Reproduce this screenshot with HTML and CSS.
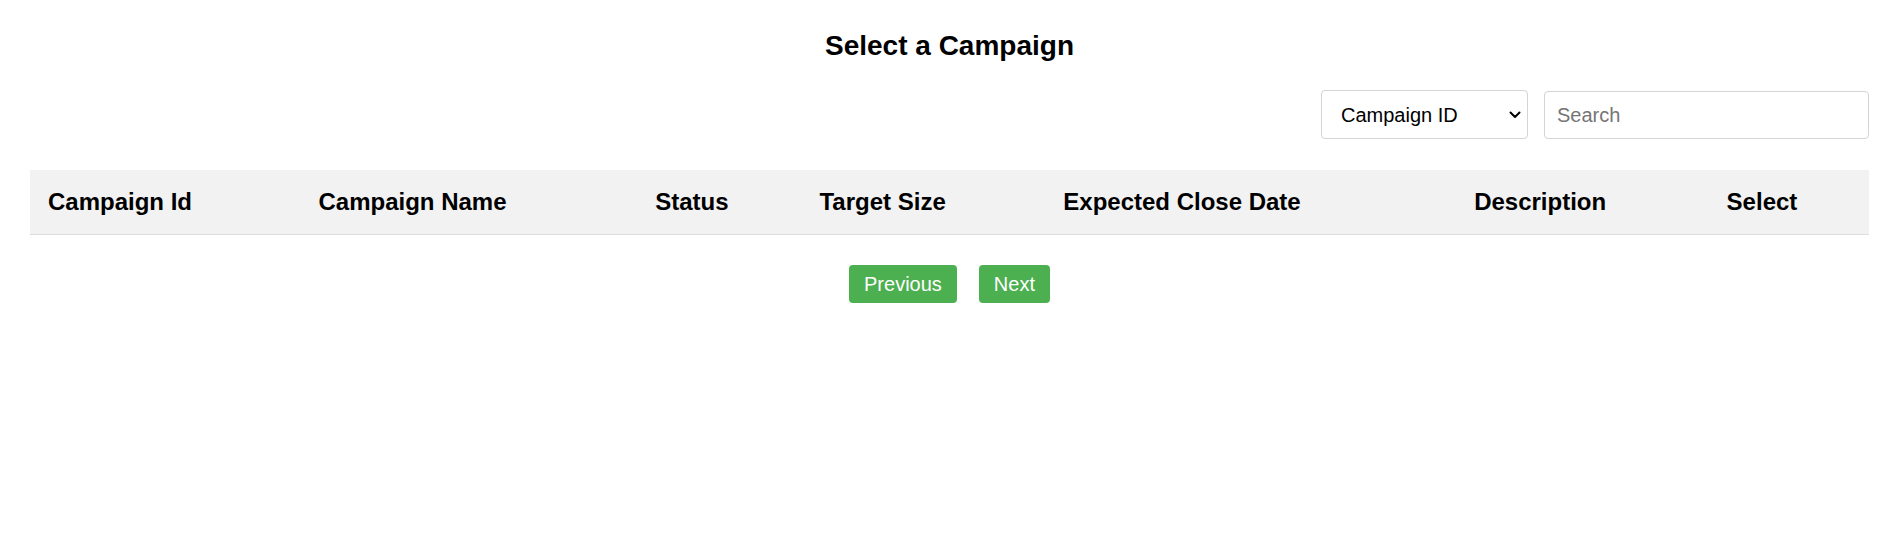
FILE: index.html
```html
<!DOCTYPE html>
<html lang="en">
<head>
<meta charset="utf-8">
<title>Select a Campaign</title>
<link rel="stylesheet" href="styles.css">
</head>
<body>
<div class="page">
  <h2 class="title">Select a Campaign</h2>
  <div class="controls">
    <div class="select-wrap">
      <select class="filter">
        <option>Campaign ID</option>
        <option>Campaign Name</option>
        <option>Status</option>
      </select>
      <svg class="chev" width="12" height="8" viewBox="0 0 12 8" aria-hidden="true"><path d="M1.5 1.5 L6 6 L10.5 1.5" fill="none" stroke="#000" stroke-width="2" stroke-linecap="round" stroke-linejoin="round"/></svg>
    </div>
    <input class="search" type="text" placeholder="Search">
  </div>
  <table class="campaigns">
    <thead>
      <tr>
        <th>Campaign Id</th>
        <th>Campaign Name</th>
        <th>Status</th>
        <th>Target Size</th>
        <th>Expected Close Date</th>
        <th>Description</th>
        <th>Select</th>
      </tr>
    </thead>
    <tbody></tbody>
  </table>
  <div class="pager">
    <button class="btn">Previous</button>
    <button class="btn">Next</button>
  </div>
</div>
</body>
</html>
```
FILE: styles.css
```css
* { box-sizing: border-box; }
html, body { margin: 0; padding: 0; background: #fff; }
body {
  font-family: "Liberation Sans", Arial, sans-serif;
  color: #000;
}
.page {
  padding: 30px 30px;
}
.title {
  margin: 0;
  text-align: center;
  font-size: 28px;
  font-weight: bold;
  line-height: 32px;
}
.controls {
  margin-top: 28px;
  display: flex;
  justify-content: flex-end;
  align-items: flex-end;
  gap: 16px;
}
.select-wrap {
  position: relative;
  width: 207px;
  height: 49px;
}
.filter {
  appearance: none;
  -webkit-appearance: none;
  width: 100%;
  height: 100%;
  margin: 0;
  padding: 0 30px 0 19px;
  font-family: "Liberation Sans", Arial, sans-serif;
  font-size: 20px;
  color: #000;
  background: #fff;
  border: 1px solid #d4d4d4;
  border-radius: 4px;
  outline: none;
}
.chev {
  position: absolute;
  right: 7px;
  top: 21px;
  pointer-events: none;
}
.search {
  width: 325px;
  height: 48px;
  margin: 0;
  padding: 0 12px;
  font-family: "Liberation Sans", Arial, sans-serif;
  font-size: 20px;
  color: #000;
  background: #fff;
  border: 1px solid #d4d4d4;
  border-radius: 4px;
  outline: none;
}
.search::placeholder { color: #757575; }
.campaigns {
  margin-top: 31px;
  width: 100%;
  border-collapse: collapse;
}
.campaigns th {
  text-align: left;
  font-size: 24px;
  font-weight: bold;
  line-height: 28px;
  padding: 18px;
  background: #f2f2f2;
  border-bottom: 1px solid #dddddd;
}
.pager {
  margin-top: 30px;
  display: flex;
  justify-content: center;
  gap: 22px;
}
.btn {
  margin: 0;
  padding: 7px 15px;
  font-family: "Liberation Sans", Arial, sans-serif;
  font-size: 20px;
  line-height: 24px;
  color: #fff;
  background: #4caf50;
  border: none;
  border-radius: 4px;
  cursor: pointer;
}
```
